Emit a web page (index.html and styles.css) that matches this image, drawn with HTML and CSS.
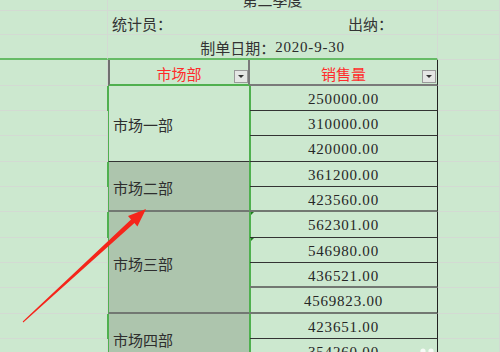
FILE: index.html
```html
<!DOCTYPE html>
<html lang="zh-CN">
<head>
<meta charset="utf-8">
<title>销售量统计</title>
<link rel="stylesheet" href="styles.css">
</head>
<body>
<div class="sheet">
  <div class="c a"></div>
  <div class="c bc title"><span>第二季度</span></div>
  <div class="c d"></div>

  <div class="c a"></div>
  <div class="c bc meta"><span>统计员：</span><span class="cashier">出纳：</span></div>
  <div class="c d"></div>

  <div class="c a top-green"></div>
  <div class="c bc date top-green">制单日期：<span class="num">2020-9-30</span></div>
  <div class="c d"></div>

  <div class="c a"></div>
  <div class="c hb">市场部<span class="filter"></span></div>
  <div class="c hc">销售量<span class="filter"></span></div>
  <div class="c d"></div>

  <div class="c a"></div>
  <div class="c b active span3">市场一部</div>
  <div class="c v">250000.00</div>
  <div class="c d"></div>

  <div class="c a"></div>
  <div class="c v">310000.00</div>
  <div class="c d"></div>

  <div class="c a"></div>
  <div class="c v">420000.00</div>
  <div class="c d"></div>

  <div class="c a"></div>
  <div class="c b sel span2 grp">市场二部</div>
  <div class="c v">361200.00</div>
  <div class="c d"></div>

  <div class="c a"></div>
  <div class="c v grp">423560.00</div>
  <div class="c d"></div>

  <div class="c a"></div>
  <div class="c b sel span4 grp">市场三部</div>
  <div class="c v err">562301.00</div>
  <div class="c d"></div>

  <div class="c a"></div>
  <div class="c v err">546980.00</div>
  <div class="c d"></div>

  <div class="c a"></div>
  <div class="c v grp">436521.00</div>
  <div class="c d"></div>

  <div class="c a"></div>
  <div class="c v grp">4569823.00</div>
  <div class="c d"></div>

  <div class="c a"></div>
  <div class="c b sel span2">市场四部</div>
  <div class="c v">423651.00</div>
  <div class="c d"></div>

  <div class="c a"></div>
  <div class="c v">354260.00</div>
  <div class="c d"></div>
</div>

<svg class="overlay" width="500" height="352" viewBox="0 0 500 352" aria-hidden="true">
  <polygon fill="#f5251b" points="23.3,322.4 134.4,223.0 137.4,226.4 146,209 128.0,216.0 131.0,219.4 22.7,321.6"/>
  <circle cx="423" cy="351" r="2.6" fill="#ffffff" opacity="0.8"/>
  <circle cx="431" cy="351" r="2.6" fill="#ffffff" opacity="0.8"/>
</svg>
</body>
</html>
```
FILE: styles.css
```css
:root {
  --bg: #cce8cf;
  --grid: #d3dad3;
  --green: #4fb04f;
  --dark: #333333;
  --mid: #727872;
}

html, body {
  margin: 0;
  padding: 0;
}

body {
  width: 500px;
  height: 352px;
  overflow: hidden;
  position: relative;
  background: var(--bg);
  font-family: "Noto Sans CJK SC", "Noto Sans", sans-serif;
  color: #333;
}

.sheet {
  display: grid;
  grid-template-columns: 108px 142px 188px 62px;
  grid-template-rows: 10.7px 24.3px 25px 25.7px repeat(11, 25.33px);
}

.c {
  box-sizing: border-box;
  display: flex;
  align-items: center;
  font-size: 15px;
  line-height: 15px;
  border-right: 1px solid var(--grid);
  border-bottom: 1px solid var(--grid);
  min-width: 0;
  overflow: hidden;
  white-space: nowrap;
}

.bc {
  grid-column: span 2;
}

.title {
  justify-content: center;
  align-items: flex-start;
}
.title span {
  margin-top: -8px;
}

.meta {
  padding: 3px 0 0 4px;
}
.meta .cashier {
  margin-left: auto;
  margin-right: 44px;
}

.date {
  justify-content: center;
  padding-top: 3px;
}

.num {
  font-family: "Liberation Serif", serif;
  letter-spacing: 0.8px;
  color: #2a2a2a;
}

.top-green {
  border-bottom: 2px solid #66bb66;
}

/* header row */
.hb, .hc {
  position: relative;
  justify-content: center;
  padding-top: 4px;
  color: #ff2b2b;
}
.hb {
  border-left: 2px solid #707070;
  border-right: 2px solid #7a7a7a;
  border-bottom: 2px solid var(--green);
}
.hc {
  border-right: 1px solid #222;
  border-bottom: 2px solid #7a7a7a;
}

.filter {
  position: absolute;
  right: 0;
  top: 10px;
  width: 14px;
  height: 13px;
  box-sizing: border-box;
  background: #e4e6e4;
  border: 1px solid #9a9a9a;
}
.hc .filter {
  right: 1px;
}
.filter::after {
  content: "";
  position: absolute;
  left: 3px;
  top: 4px;
  border-left: 3.5px solid transparent;
  border-right: 3.5px solid transparent;
  border-top: 3.5px solid #333;
}

/* column B merged cells */
.b {
  padding: 3px 0 0 4px;
  border-left: 1px solid var(--green);
  border-right: 1px solid var(--green);
  box-shadow: -1px 0 0 var(--green), 1px 0 0 var(--green);
  color: #2e2e2e;
}
.active {
  background: var(--bg);
  border-bottom: 1px solid var(--dark);
}
.sel {
  background: #adc5ad;
}
.b.grp {
  border-bottom: 2px solid var(--mid);
}
.span2 { grid-row: span 2; }
.span3 { grid-row: span 3; }
.span4 { grid-row: span 4; }

/* column C values */
.v {
  position: relative;
  justify-content: center;
  padding-top: 3px;
  font-family: "Liberation Serif", serif;
  letter-spacing: 0.8px;
  color: #262626;
  border-right: 1px solid #222;
  border-bottom: 1px solid var(--dark);
}
.v.grp {
  border-bottom: 2px solid var(--mid);
}
.err::before {
  content: "";
  position: absolute;
  left: 1px;
  top: 0;
  border-top: 3px solid #1f7a1f;
  border-right: 3px solid transparent;
}

.overlay {
  position: absolute;
  left: 0;
  top: 0;
  pointer-events: none;
}
```
